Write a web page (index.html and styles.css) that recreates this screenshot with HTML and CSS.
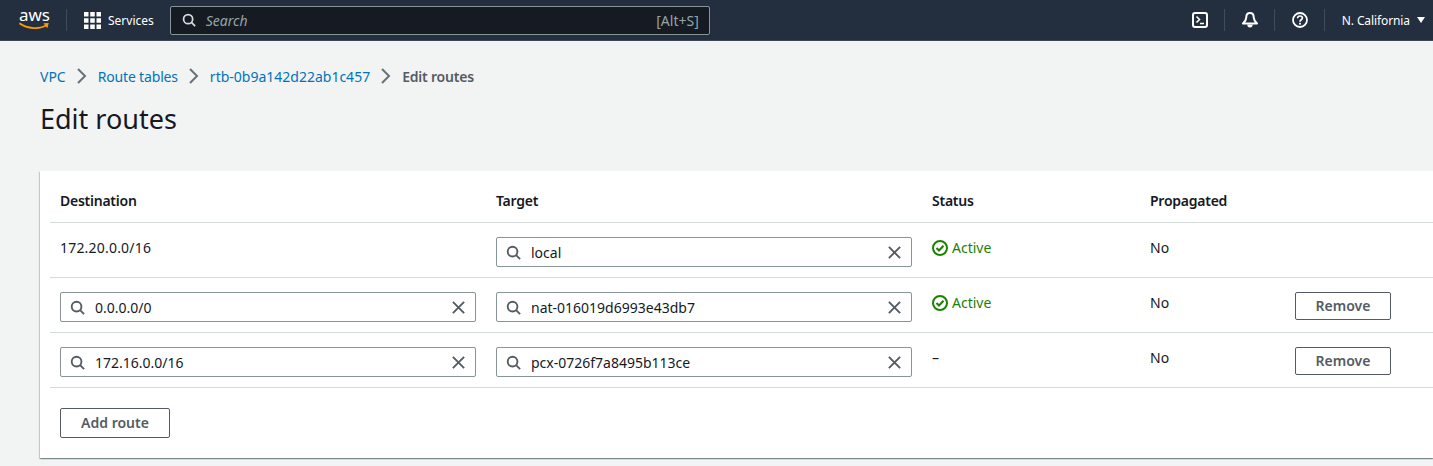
FILE: index.html
```html
<!DOCTYPE html>
<html lang="en">
<head>
  <meta charset="UTF-8">
  <meta name="viewport" content="width=device-width, initial-scale=1.0">
  <title>Edit routes</title>
  <link rel="stylesheet" href="styles.css">
</head>
<body>
  <svg class="sprites" width="0" height="0">
    <symbol id="i-search" viewBox="0 0 16 16"><circle cx="7" cy="7" r="5.2" fill="none" stroke="currentColor" stroke-width="2"/><path d="M10.8 10.8 15 15" fill="none" stroke="currentColor" stroke-width="2"/></symbol>
    <symbol id="i-close" viewBox="0 0 16 16"><path d="M2 2l12 12M14 2 2 14" fill="none" stroke="currentColor" stroke-width="2"/></symbol>
    <symbol id="i-chevron" viewBox="0 0 16 16"><path d="M4 1 11 8l-7 7" fill="none" stroke="currentColor" stroke-width="2"/></symbol>
    <symbol id="i-ok" viewBox="0 0 16 16"><circle cx="8" cy="8" r="7" fill="none" stroke="currentColor" stroke-width="2"/><path d="M4.500 8l2.500 2.500 4.500-4.800" fill="none" stroke="currentColor" stroke-width="2"/></symbol>
  </svg>

  <header class="topbar">
    <div class="logo">
      <span class="logo-text">aws</span>
      <svg class="logo-smile" viewBox="0 0 36 9"><path d="M1 1.500C10 8 24 8.500 32 3.500" fill="none" stroke="#ff9900" stroke-width="2"/><path d="M28 1.500l6-.500-1.500 6" fill="#ff9900"/></svg>
    </div>
    <span class="bar-sep"></span>
    <svg class="grid-icon" viewBox="0 0 17 17" fill="#fff">
      <rect x="0" y="0" width="4.500" height="4.500"/><rect x="6.250" y="0" width="4.500" height="4.500"/><rect x="12.500" y="0" width="4.500" height="4.500"/>
      <rect x="0" y="6.250" width="4.500" height="4.500"/><rect x="6.250" y="6.250" width="4.500" height="4.500"/><rect x="12.500" y="6.250" width="4.500" height="4.500"/>
      <rect x="0" y="12.500" width="4.500" height="4.500"/><rect x="6.250" y="12.500" width="4.500" height="4.500"/><rect x="12.500" y="12.500" width="4.500" height="4.500"/>
    </svg>
    <span class="services">Services</span>
    <div class="searchbar">
      <svg class="searchbar-icon"><use href="#i-search"/></svg>
      <span class="searchbar-text">Search</span>
      <span class="searchbar-key">[Alt+S]</span>
    </div>
    <div class="bar-right">
      <svg class="bar-icon" viewBox="0 0 16 16"><rect x="1" y="1" width="14" height="14" rx="2" fill="none" stroke="#fff" stroke-width="2"/><path d="M4.500 4.500 7.500 7.500 4.500 10.500M8 11.500h4" fill="none" stroke="#fff" stroke-width="1.600"/></svg>
      <span class="bar-sep"></span>
      <svg class="bar-icon" viewBox="0 0 16 16"><path d="M8 1C5.400 1 4.300 3 4.300 5.200c0 2.600-1.300 4.300-3.300 6.300h14c-2-2-3.300-3.700-3.300-6.300C11.700 3 10.600 1 8 1z" fill="none" stroke="#fff" stroke-width="2" stroke-linejoin="round"/><path d="M5.300 12.500a2.700 3 0 0 0 5.400 0z" fill="#fff"/></svg>
      <span class="bar-sep"></span>
      <svg class="bar-icon" viewBox="0 0 16 16"><circle cx="8" cy="8" r="7" fill="none" stroke="#fff" stroke-width="1.800"/><path d="M5.600 6.200C5.700 4.800 6.700 4 8 4s2.400.9 2.400 2.100C10.400 7.800 8 7.800 8 9.700" fill="none" stroke="#fff" stroke-width="1.700"/><rect x="7.100" y="10.800" width="1.800" height="1.800" fill="#fff"/></svg>
      <span class="bar-sep"></span>
      <span class="region">N. California</span>
      <span class="caret"></span>
    </div>
  </header>

  <main class="content">
    <nav class="crumbs">
      <a>VPC</a>
      <svg class="crumb-sep"><use href="#i-chevron"/></svg>
      <a class="crumb-tight">Route tables</a>
      <svg class="crumb-sep"><use href="#i-chevron"/></svg>
      <a>rtb-0b9a142d22ab1c457</a>
      <svg class="crumb-sep"><use href="#i-chevron"/></svg>
      <span class="crumb-current">Edit routes</span>
    </nav>
    <h1>Edit routes</h1>

    <section class="card">
      <div class="row head">
        <div>Destination</div>
        <div>Target</div>
        <div>Status</div>
        <div>Propagated</div>
        <div></div>
      </div>

      <div class="row">
        <div class="cell-text cell-cidr">172.20.0.0/16</div>
        <div>
          <div class="field">
            <svg class="field-search"><use href="#i-search"/></svg>
            <span class="field-value">local</span>
            <svg class="field-clear"><use href="#i-close"/></svg>
          </div>
        </div>
        <div class="cell-text status-ok"><svg class="ok-icon"><use href="#i-ok"/></svg>Active</div>
        <div class="cell-text">No</div>
        <div></div>
      </div>

      <div class="row">
        <div>
          <div class="field">
            <svg class="field-search"><use href="#i-search"/></svg>
            <span class="field-value">0.0.0.0/0</span>
            <svg class="field-clear"><use href="#i-close"/></svg>
          </div>
        </div>
        <div>
          <div class="field">
            <svg class="field-search"><use href="#i-search"/></svg>
            <span class="field-value">nat-016019d6993e43db7</span>
            <svg class="field-clear"><use href="#i-close"/></svg>
          </div>
        </div>
        <div class="cell-text status-ok"><svg class="ok-icon"><use href="#i-ok"/></svg>Active</div>
        <div class="cell-text">No</div>
        <div><button class="btn btn-remove">Remove</button></div>
      </div>

      <div class="row">
        <div>
          <div class="field">
            <svg class="field-search"><use href="#i-search"/></svg>
            <span class="field-value">172.16.0.0/16</span>
            <svg class="field-clear"><use href="#i-close"/></svg>
          </div>
        </div>
        <div>
          <div class="field">
            <svg class="field-search"><use href="#i-search"/></svg>
            <span class="field-value">pcx-0726f7a8495b113ce</span>
            <svg class="field-clear"><use href="#i-close"/></svg>
          </div>
        </div>
        <div class="cell-text">–</div>
        <div class="cell-text">No</div>
        <div><button class="btn btn-remove">Remove</button></div>
      </div>

      <div class="card-foot">
        <button class="btn btn-add">Add route</button>
      </div>
    </section>
  </main>
</body>
</html>
```

FILE: styles.css
```css
html, body {
  margin: 0;
  height: 466px;
  overflow: hidden;
}
body {
  font-family: "Noto Sans", Arial, sans-serif;
  font-size: 14px;
  background-color: #f2f3f3;
  color: #16191f;
}
.sprites {
  display: block;
}

/* top bar */
.topbar {
  display: flex;
  align-items: center;
  height: 40px;
  background: #232f3e;
  border-bottom: 1px solid #3c4654;
  color: #fff;
  padding-left: 18px;
  padding-right: 8px;
}
.logo {
  display: flex;
  flex-direction: column;
  width: 33px;
  margin-top: -4px;
}
.logo-text {
  font-size: 17px;
  line-height: 15px;
  text-align: center;
}
.logo-smile {
  width: 33px;
  height: 8px;
}
.bar-sep {
  width: 1px;
  height: 22px;
  background: #414d5c;
}
.topbar > .bar-sep {
  margin-left: 15px;
}
.grid-icon {
  width: 17px;
  height: 17px;
  margin-left: 17px;
}
.services {
  font-size: 12px;
  margin-left: 7px;
}
.searchbar {
  display: flex;
  align-items: center;
  width: 540px;
  height: 29px;
  margin-left: 16px;
  background: #161b23;
  border: 1px solid #879596;
  border-radius: 2px;
  padding: 0 10px 0 11px;
  box-sizing: border-box;
}
.searchbar-icon {
  width: 14px;
  height: 14px;
  color: #d5dbdb;
}
.searchbar-text {
  font-style: italic;
  font-size: 14px;
  color: #95a5a6;
  margin-left: 10px;
}
.searchbar-key {
  font-size: 14px;
  color: #95a5a6;
  margin-left: auto;
}
.bar-right {
  display: flex;
  align-items: center;
  margin-left: auto;
  gap: 16.500px;
}
.bar-icon {
  width: 16px;
  height: 16px;
}
.region {
  font-size: 12px;
  letter-spacing: -0.100px;
  margin-right: -9.500px;
}
.caret {
  width: 0;
  height: 0;
  border-left: 4px solid transparent;
  border-right: 4px solid transparent;
  border-top: 6px solid #fff;
}

/* page */
.content {
  padding: 26px 0 0 40px;
}
.crumbs {
  display: flex;
  align-items: center;
  height: 18px;
  font-size: 14px;
}
.crumbs a {
  color: #0073bb;
}
.crumbs .crumb-tight {
  letter-spacing: -0.170px;
}
.crumb-sep {
  width: 16px;
  height: 16px;
  margin: 0 8px;
  color: #687078;
}
.crumb-current {
  color: #545b64;
  font-weight: 600;
  letter-spacing: -0.200px;
}
h1 {
  margin: 16px 0 0;
  font-size: 27px;
  font-weight: 400;
  line-height: 36px;
}

/* table card */
.card {
  height: 287px;
  margin-top: 34px;
  background: #fff;
  box-shadow: 0 1px 1px 0 rgba(0, 28, 36, 0.3), 1px 1px 1px 0 rgba(0, 28, 36, 0.15), -1px 1px 1px 0 rgba(0, 28, 36, 0.15);
  padding-left: 10px;
  box-sizing: border-box;
}
.row {
  display: grid;
  grid-template-columns: 436px 436px 218px 145px 1fr;
  height: 55px;
  box-sizing: border-box;
  border-bottom: 1px solid #d5dbdb;
  padding: 14px 0 0 10px;
}
.row.head {
  height: 52px;
  padding-top: 20px;
  font-weight: 600;
  letter-spacing: -0.250px;
}
.cell-text {
  line-height: 20px;
  padding-top: 1px;
}
.cell-cidr {
  letter-spacing: 0.200px;
}
.status-ok {
  display: flex;
  align-items: center;
  align-self: start;
  gap: 4px;
  color: #1d8102;
}
.ok-icon {
  width: 16px;
  height: 16px;
}
.field {
  display: flex;
  align-items: center;
  width: 416px;
  height: 30px;
  box-sizing: border-box;
  border: 1px solid #879596;
  border-radius: 2px;
  padding: 0 9px;
  background: #fff;
  color: #545b64;
}
.field-search {
  width: 15px;
  height: 15px;
}
.field-value {
  margin-left: 10px;
  color: #16191f;
}
.field-clear {
  width: 15px;
  height: 15px;
  margin-left: auto;
}
.btn {
  display: block;
  box-sizing: border-box;
  background: #fff;
  border: 1px solid #545b64;
  border-radius: 2px;
  font-family: inherit;
  font-size: 14px;
  font-weight: 600;
  color: #545b64;
  padding: 0 0 1px;
}
.btn-remove {
  width: 96px;
  height: 28px;
}
.btn-add {
  width: 110px;
  height: 30px;
}
.card-foot {
  padding: 20px 0 0 10px;
}
```
